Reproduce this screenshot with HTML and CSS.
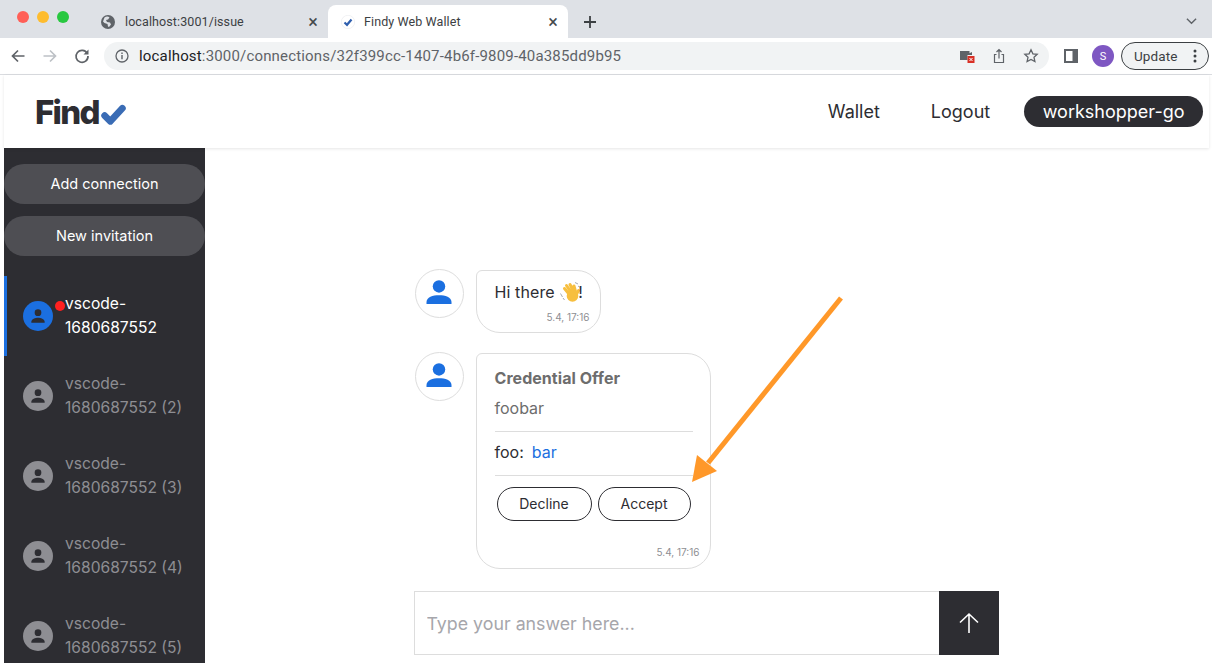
FILE: index.html
```html
<!DOCTYPE html>
<html lang="en">
<head>
    <meta charset="UTF-8">
    <title>Findy Web Wallet</title>
    <link rel="stylesheet" href="styles.css">
</head>
<body>
    <!-- Browser chrome -->
    <div class="tabstrip">
        <div class="lights">
            <span class="light light-red"></span>
            <span class="light light-yellow"></span>
            <span class="light light-green"></span>
        </div>
        <div class="tab">
            <svg class="favicon" viewBox="0 0 14 14"><circle cx="7" cy="7" r="7" fill="#5f6368"/><path d="M3.500 2.500c2-1.500 4-1 5 0l-1.500 2-2 .5 1 2 3 .5 1 2-2 2.500-1-.5-.5-2.500-3-1-1.500-1.500z" fill="#dee1e6"/></svg>
            <span class="tab-title">localhost:3001/issue</span>
            <span class="tab-close">&#215;</span>
        </div>
        <div class="tab tab-active">
            <svg class="favicon" viewBox="0 0 14 14"><circle cx="7" cy="7" r="6.700" fill="#fff" stroke="#e8eaed" stroke-width="0.600"/><path d="M3.500 7.500l2.500 2.300L10.500 4.500" fill="none" stroke="#2f5fae" stroke-width="2.200"/></svg>
            <span class="tab-title">Findy Web Wallet</span>
            <span class="tab-close">&#215;</span>
        </div>
        <svg class="newtab" viewBox="0 0 14 14"><path d="M7 1v12M1 7h12" stroke="#3c4043" stroke-width="1.800"/></svg>
        <svg class="tabs-menu" viewBox="0 0 12 8"><path d="M1 1.500l5 5 5-5" fill="none" stroke="#5f6368" stroke-width="1.500"/></svg>
    </div>
    <div class="toolbar">
        <svg class="nav-icon" viewBox="0 0 16 16"><path d="M14.500 8H2.500M8 2.500L2.500 8 8 13.500" fill="none" stroke="#5f6368" stroke-width="1.700"/></svg>
        <svg class="nav-icon" viewBox="0 0 16 16"><path d="M1.500 8h12M8 2.500L13.500 8 8 13.500" fill="none" stroke="#bdc1c6" stroke-width="1.700"/></svg>
        <svg class="nav-icon" viewBox="0 0 16 16"><path d="M13.300 5.500A6 6 0 1 0 14 8" fill="none" stroke="#5f6368" stroke-width="1.700"/><path d="M14.500 1.500v5h-5z" fill="#5f6368"/></svg>
        <div class="urlbar">
            <svg class="info-icon" viewBox="0 0 14 14"><circle cx="7" cy="7" r="6" fill="none" stroke="#5f6368" stroke-width="1.300"/><path d="M7 6v4.200M7 3.600v1.300" stroke="#5f6368" stroke-width="1.400"/></svg>
            <span class="url"><span class="url-host">localhost</span>:3000/connections/32f399cc-1407-4b6f-9809-40a385dd9b95</span>
            <svg class="url-icon" viewBox="0 0 16 16"><path d="M1 3h9.500v2.200L13 4v3H8.500v5H1z" fill="#5f6368"/><rect x="8.500" y="8" width="7" height="7" fill="#d93025"/><path d="M10.500 10l3 3m0-3l-3 3" stroke="#fff" stroke-width="1"/></svg>
            <svg class="url-icon" viewBox="0 0 16 16"><path d="M5.500 6.500H3.500v8h9v-8h-2M8 10.500V1.500M5.500 4L8 1.500 10.500 4" fill="none" stroke="#5f6368" stroke-width="1.200"/></svg>
            <svg class="url-icon" viewBox="0 0 16 16"><path d="M8 1.800l1.900 4 4.300.5-3.200 3 .9 4.300L8 11.400l-3.900 2.200.9-4.300-3.200-3 4.300-.5z" fill="none" stroke="#5f6368" stroke-width="1.300"/></svg>
        </div>
        <svg class="panel-icon" viewBox="0 0 14 14"><path d="M0 0h14v14H0z" fill="#5f6368"/><path d="M2 2h6.500v10H2z" fill="#fff"/></svg>
        <span class="profile">S</span>
        <div class="update">
            <span>Update</span>
            <svg class="update-dots" viewBox="0 0 4 14"><circle cx="2" cy="2" r="1.500"/><circle cx="2" cy="7" r="1.500"/><circle cx="2" cy="12" r="1.500"/></svg>
        </div>
    </div>

    <!-- App -->
    <div class="app">
        <header class="app-header">
            <div class="logo">
                <span class="logo-text">Find</span>
                <svg class="logo-check" viewBox="0 0 24 20"><path d="M3.500 11l5.500 5.500L20.500 4" fill="none" stroke="#3a6cb5" stroke-width="6.500" stroke-linecap="round" stroke-linejoin="round"/></svg>
            </div>
            <nav class="app-nav">
                <a class="nav-link">Wallet</a>
                <a class="nav-link">Logout</a>
                <span class="user-pill">workshopper-go</span>
            </nav>
        </header>
        <div class="app-body">
            <aside class="sidebar">
                <button class="side-btn">Add connection</button>
                <button class="side-btn">New invitation</button>
                <ul class="conn-list">
                    <li class="conn conn-active">
                        <span class="conn-avatar">
                            <svg viewBox="0 0 24 24"><circle cx="12" cy="8" r="4"/><path d="M4 19c0-3.500 5-5 8-5s8 1.500 8 5v1H4z"/></svg>
                            <span class="conn-dot"></span>
                        </span>
                        <span class="conn-name">vscode-<br>1680687552</span>
                    </li>
                    <li class="conn">
                        <span class="conn-avatar"><svg viewBox="0 0 24 24"><circle cx="12" cy="8" r="4"/><path d="M4 19c0-3.500 5-5 8-5s8 1.500 8 5v1H4z"/></svg></span>
                        <span class="conn-name">vscode-<br>1680687552 (2)</span>
                    </li>
                    <li class="conn">
                        <span class="conn-avatar"><svg viewBox="0 0 24 24"><circle cx="12" cy="8" r="4"/><path d="M4 19c0-3.500 5-5 8-5s8 1.500 8 5v1H4z"/></svg></span>
                        <span class="conn-name">vscode-<br>1680687552 (3)</span>
                    </li>
                    <li class="conn">
                        <span class="conn-avatar"><svg viewBox="0 0 24 24"><circle cx="12" cy="8" r="4"/><path d="M4 19c0-3.500 5-5 8-5s8 1.500 8 5v1H4z"/></svg></span>
                        <span class="conn-name">vscode-<br>1680687552 (4)</span>
                    </li>
                    <li class="conn">
                        <span class="conn-avatar"><svg viewBox="0 0 24 24"><circle cx="12" cy="8" r="4"/><path d="M4 19c0-3.500 5-5 8-5s8 1.500 8 5v1H4z"/></svg></span>
                        <span class="conn-name">vscode-<br>1680687552 (5)</span>
                    </li>
                </ul>
            </aside>
            <main class="chat-area">
                <div class="chat">
                    <div class="msg">
                        <span class="msg-avatar"><svg viewBox="0 0 24 24"><circle cx="12" cy="7.500" r="5"/><path d="M2 20c0-4 5-5.500 10-5.500s10 1.500 10 5.500v1.500H2z"/></svg></span>
                        <div class="bubble bubble-hi">
                            <p class="hi-text">Hi there <svg class="wave" viewBox="0 0 22 22"><g fill="none" stroke="#f7bf3f" stroke-width="3" stroke-linecap="round"><path d="M10 13L5.500 7.500M12 11L7.500 4.500M14.500 10L11 3.500M16.500 10.500L15 5"/><path d="M17 14L19.500 9.500" /></g><circle cx="13.500" cy="15" r="5.800" fill="#f7bf3f"/><path d="M1.500 12.500l2 3.500M4 17l1.500 2M16 1.500l3 1.500M19 5l1.500 1" stroke="#a8adb3" stroke-width="1" fill="none"/></svg>!</p>
                            <span class="stamp">5.4, 17:16</span>
                        </div>
                    </div>
                    <div class="msg">
                        <span class="msg-avatar"><svg viewBox="0 0 24 24"><circle cx="12" cy="7.500" r="5"/><path d="M2 20c0-4 5-5.500 10-5.500s10 1.500 10 5.500v1.500H2z"/></svg></span>
                        <div class="bubble bubble-offer">
                            <h3 class="offer-title">Credential Offer</h3>
                            <p class="offer-name">foobar</p>
                            <div class="offer-attr"><span>foo:</span><span class="attr-value">bar</span></div>
                            <div class="offer-actions">
                                <button class="offer-btn offer-decline">Decline</button>
                                <button class="offer-btn offer-accept">Accept</button>
                            </div>
                            <span class="stamp">5.4, 17:16</span>
                        </div>
                    </div>
                    <div class="composer">
                        <input class="answer" type="text" placeholder="Type your answer here...">
                        <button class="send">
                            <svg viewBox="0 0 20 22"><path d="M10 21V2M1 10.500L10 2l9 8.500" fill="none" stroke="#fff" stroke-width="1.600"/></svg>
                        </button>
                    </div>
                </div>
            </main>
        </div>
    </div>

    <!-- Annotation arrow drawn over the page -->
    <svg class="annotation" viewBox="0 0 1212 663">
        <path d="M841 298L708 463" stroke="#ff9829" stroke-width="5" fill="none"/>
        <path d="M692 482L697 455L717 471z" fill="#ff9829"/>
    </svg>
</body>
</html>
```

FILE: styles.css
```css
/* Page */
html, body {
    height: 100%;
}

body {
    margin: 0;
    height: 100vh;
    overflow: hidden;
    background-color: #fff;
    font-family: "Inter", "Liberation Sans", sans-serif;
    color: #2d2d32;
    display: flex;
    flex-direction: column;
}

/* Browser chrome */
.tabstrip {
    height: 38px;
    flex: none;
    background-color: #dee1e6;
    display: flex;
    align-items: flex-end;
    font-family: "Roboto", "Liberation Sans", sans-serif;
    font-size: 12.500px;
    letter-spacing: 0.100px;
    color: #3c4043;
}

.lights {
    width: 97px;
    height: 100%;
    padding: 11px 0 0 17px;
    box-sizing: border-box;
    display: flex;
    gap: 8px;
}

.light {
    width: 12px;
    height: 12px;
    border-radius: 50%;
}

.light-red { background-color: #ff5f57; }
.light-yellow { background-color: #febc2e; }
.light-green { background-color: #28c840; }

.tab {
    width: 231px;
    height: 33px;
    padding: 0 10px 0 4px;
    box-sizing: border-box;
    display: flex;
    align-items: center;
}

.tab-active {
    width: 240px;
    padding-left: 13px;
    background-color: #fff;
    border-radius: 8px 8px 0 0;
}

.favicon {
    width: 14px;
    height: 14px;
    margin-right: 10px;
    flex: none;
}

.tab-active .favicon {
    margin-right: 9px;
}

.tab-title {
    flex: 1;
    white-space: nowrap;
}

.tab-close {
    font-size: 18px;
    line-height: 1;
    color: #45494d;
}

.newtab {
    width: 14px;
    height: 14px;
    margin: 0 0 9px 15px;
}

.tabs-menu {
    width: 11px;
    height: 8px;
    margin: 0 15px 13px auto;
}

.toolbar {
    height: 37px;
    flex: none;
    box-sizing: border-box;
    border-bottom: 1px solid #dadce0;
    display: flex;
    align-items: center;
    padding-left: 10px;
    background-color: #fff;
}

.nav-icon {
    width: 16px;
    height: 16px;
    margin-right: 16px;
    flex: none;
}

.urlbar {
    width: 945px;
    height: 28px;
    margin-left: -2px;
    box-sizing: border-box;
    flex: none;
    border-radius: 14px;
    background-color: #f1f3f4;
    display: flex;
    align-items: center;
    padding: 0 10px 0 11px;
    font-family: "Roboto", "Liberation Sans", sans-serif;
    font-size: 15px;
    letter-spacing: 0.170px;
    color: #5f6368;
}

.info-icon {
    width: 14px;
    height: 14px;
    margin-right: 10px;
}

.url {
    flex: 1;
    white-space: nowrap;
}

.url-host {
    color: #202124;
}

.url-icon {
    width: 16px;
    height: 16px;
    margin-left: 16px;
}

.panel-icon {
    width: 14px;
    height: 14px;
    margin-left: 15px;
}

.profile {
    width: 22px;
    height: 22px;
    margin-left: 14px;
    border-radius: 50%;
    background-color: #7e57c2;
    color: #fff;
    font-family: "Roboto", "Liberation Sans", sans-serif;
    font-size: 11px;
    display: flex;
    align-items: center;
    justify-content: center;
}

.update {
    width: 88px;
    height: 28px;
    margin-left: 7px;
    box-sizing: border-box;
    border: 1px solid #3c4043;
    border-radius: 14px;
    background-color: #f1f3f4;
    display: flex;
    align-items: center;
    justify-content: space-between;
    padding: 0 11px 0 12px;
    font-family: "Roboto", "Liberation Sans", sans-serif;
    font-size: 13.500px;
    letter-spacing: 0.100px;
    color: #3c4043;
}

.update-dots {
    width: 4px;
    height: 14px;
    fill: #3c4043;
}

/* App */
.app {
    flex: 1;
    min-height: 0;
    margin: 0 3px 0 4px;
    display: flex;
    flex-direction: column;
}

.app-header {
    height: 73px;
    flex: none;
    box-sizing: border-box;
    display: flex;
    align-items: center;
    justify-content: space-between;
    padding: 0 6px 0 31px;
    background-color: #fff;
    box-shadow: 0 1px 3px rgba(0, 0, 0, 0.1);
    position: relative;
}

.logo {
    display: flex;
    align-items: flex-end;
    height: 26px;
}

.logo-text {
    font-size: 33px;
    line-height: 26px;
    font-weight: 800;
    letter-spacing: -1.700px;
    color: #2d2d32;
}

.logo-check {
    width: 25px;
    height: 21px;
    margin-left: 2px;
}

.app-nav {
    display: flex;
    align-items: center;
    font-size: 18px;
}

.nav-link {
    margin-left: 17px;
    margin-right: 34px;
    color: #2d2d32;
}

.user-pill {
    height: 31px;
    padding: 0 18.500px;
    border-radius: 16px;
    background-color: #2d2d32;
    color: #fff;
    display: flex;
    align-items: center;
}

.app-body {
    flex: 1;
    min-height: 0;
    display: flex;
}

.sidebar {
    width: 201px;
    flex: none;
    background-color: #2d2d32;
    padding-top: 16px;
    overflow: hidden;
}

.side-btn {
    display: block;
    width: 100%;
    height: 40px;
    margin-bottom: 12px;
    padding: 0 0 2px;
    border: 0;
    border-radius: 20px;
    background-color: #4e4e53;
    color: #fff;
    font-family: inherit;
    font-size: 14.500px;
    font-weight: 400;
}

.conn-list {
    list-style: none;
    margin: 20px 0 0;
    padding: 0;
}

.conn {
    height: 80px;
    box-sizing: border-box;
    display: flex;
    align-items: center;
    padding-left: 19px;
    font-size: 15.600px;
    line-height: 24px;
    color: #8e8e93;
}

.conn-active {
    border-left: 3px solid #1b6fe0;
    padding-left: 16px;
    color: #fff;
}

.conn-avatar {
    width: 30px;
    height: 30px;
    flex: none;
    border-radius: 50%;
    background-color: #8e8e93;
    display: flex;
    align-items: center;
    justify-content: center;
    position: relative;
}

.conn-active .conn-avatar {
    background-color: #1b6fe0;
}

.conn-avatar svg {
    width: 20px;
    height: 20px;
    fill: #2d2d32;
}

.conn-dot {
    position: absolute;
    top: 0;
    right: -12px;
    width: 10px;
    height: 10px;
    border-radius: 50%;
    background-color: #ff2020;
}

.conn-name {
    margin-left: 12px;
    white-space: nowrap;
}

/* Chat */
.chat-area {
    flex: 1;
    min-width: 0;
    padding-right: 2px;
    display: flex;
    justify-content: center;
    background-color: #fff;
}

.chat {
    width: 585px;
    padding-top: 121px;
}

.msg {
    display: flex;
    align-items: flex-start;
    margin-bottom: 19px;
}

.msg-avatar {
    width: 49px;
    height: 49px;
    flex: none;
    box-sizing: border-box;
    border: 1px solid #ddd;
    border-radius: 50%;
    display: flex;
    align-items: center;
    justify-content: center;
    margin: 0 12px 0 1px;
    padding-bottom: 4px;
}

.msg-avatar svg {
    width: 30px;
    height: 30px;
    fill: #1b6fe0;
}

.bubble {
    box-sizing: border-box;
    border: 1px solid #ddd;
    border-radius: 6px 24px 24px 24px;
    margin-top: 1px;
    display: flex;
    flex-direction: column;
    padding: 0 10px 0 18px;
}

.bubble-hi {
    width: 125px;
    height: 63px;
}

.hi-text {
    margin: 10px 0 0;
    font-size: 16px;
    line-height: 20px;
    letter-spacing: 0.100px;
    white-space: nowrap;
}

.wave {
    width: 22px;
    height: 22px;
    margin-right: -3px;
    vertical-align: -5px;
}

.stamp {
    margin-top: auto;
    margin-bottom: 9px;
    align-self: flex-end;
    font-size: 10px;
    line-height: 12px;
    color: #8e8e93;
}

.bubble-offer {
    width: 235px;
    height: 216px;
    padding-right: 17px;
}

.offer-title {
    margin: 14px 0 0;
    font-size: 16px;
    line-height: 20px;
    font-weight: 700;
    letter-spacing: 0.050px;
    color: #6d6d6d;
}

.offer-name {
    margin: 10px 0 0;
    padding-bottom: 13px;
    font-size: 16px;
    line-height: 20px;
    color: #6d6d6d;
    border-bottom: 1px solid #ddd;
}

.offer-attr {
    padding: 10px 0 13px;
    font-size: 16px;
    line-height: 20px;
    border-bottom: 1px solid #ddd;
    display: flex;
    gap: 8px;
}

.attr-value {
    color: #1b6fe0;
}

.offer-actions {
    display: flex;
    gap: 6px;
    margin: 11px 2px 0 2px;
}

.offer-btn {
    height: 34px;
    padding: 0 0 1px;
    border: 1px solid #2d2d32;
    border-radius: 17px;
    background-color: #fff;
    color: #2d2d32;
    font-family: inherit;
    font-size: 14px;
}

.offer-decline { width: 95px; }
.offer-accept { width: 93px; }

.bubble-offer .stamp {
    margin-bottom: 10px;
    margin-right: -7px;
}

.composer {
    height: 64px;
    display: flex;
    margin-top: 22px;
}

.answer {
    flex: 1;
    min-width: 0;
    box-sizing: border-box;
    border: 1px solid #ddd;
    border-right: 0;
    padding: 0 12px;
    font-family: inherit;
    font-size: 17.800px;
    outline: none;
}

.answer::placeholder {
    color: #a6a6ab;
}

.send {
    width: 60px;
    flex: none;
    border: 0;
    padding: 0;
    background-color: #2d2d32;
    display: flex;
    align-items: center;
    justify-content: center;
}

.send svg {
    width: 20px;
    height: 22px;
}

/* Annotation */
.annotation {
    position: absolute;
    left: 0;
    top: 0;
    width: 1212px;
    height: 663px;
    pointer-events: none;
}
```
